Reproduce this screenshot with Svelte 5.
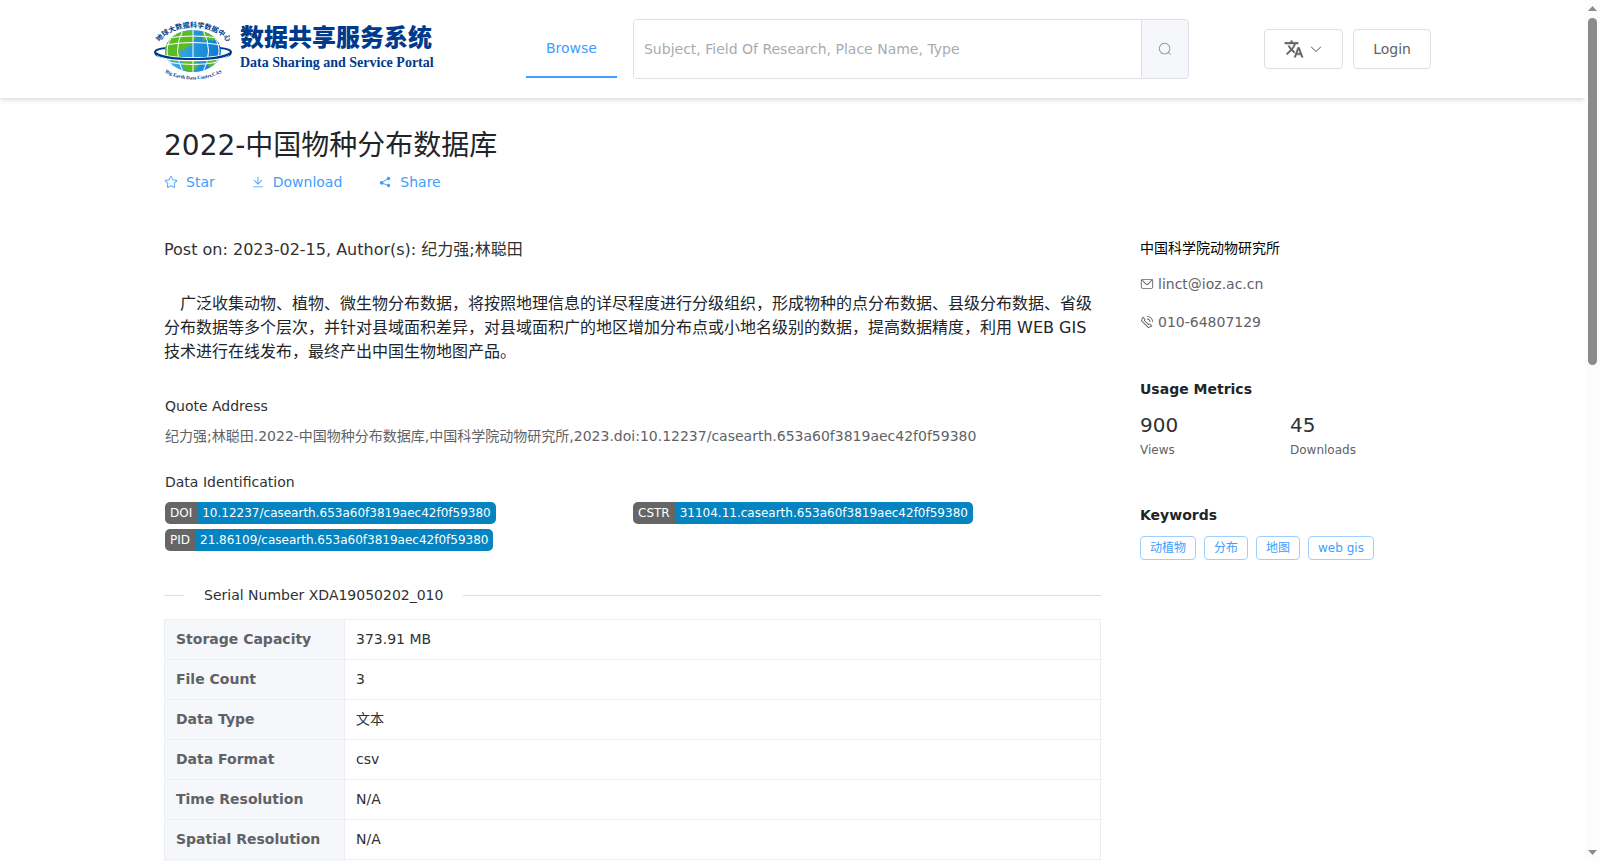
<script lang="ts">
	const icons = {
		search: 'm795.904 750.72 124.992 124.928a32 32 0 0 1-45.248 45.248L750.656 795.904a416 416 0 1 1 45.248-45.184zM480 832a352 352 0 1 0 0-704 352 352 0 0 0 0 704z',
		arrowDown: 'M831.872 340.864 512 652.672 192.128 340.864a30.592 30.592 0 0 0-42.752 0 29.12 29.12 0 0 0 0 41.6L489.664 714.24a32 32 0 0 0 44.672 0l340.288-331.712a29.12 29.12 0 0 0 0-41.728 30.592 30.592 0 0 0-42.752 0z',
		star: 'm512 747.84 228.16 119.936a6.4 6.4 0 0 0 9.28-6.72l-43.52-254.08 184.512-179.904a6.4 6.4 0 0 0-3.52-10.88l-255.104-37.12L517.76 147.904a6.4 6.4 0 0 0-11.52 0L392.192 379.072l-255.104 37.12a6.4 6.4 0 0 0-3.52 10.88L318.08 606.976l-43.584 254.08a6.4 6.4 0 0 0 9.28 6.72L512 747.84zM313.6 924.48a70.4 70.4 0 0 1-102.144-74.24l37.888-220.928L88.96 472.96A70.4 70.4 0 0 1 128 352.896l221.76-32.256 99.2-200.96a70.4 70.4 0 0 1 126.208 0l99.2 200.96 221.824 32.256a70.4 70.4 0 0 1 39.04 120.064L774.72 629.376l37.888 220.928a70.4 70.4 0 0 1-102.144 74.24L512 820.096l-198.4 104.32z',
		download: 'M160 832h704a32 32 0 1 1 0 64H160a32 32 0 1 1 0-64zm384-253.696 236.288-236.352 45.248 45.248L508.8 704 192 387.2l45.248-45.248L480 584.704V128h64v450.304z',
		share: 'm679.872 348.8-301.76 188.608a127.808 127.808 0 0 1 5.12 52.16l279.936 104.96a128 128 0 1 1-22.464 59.904l-279.872-104.96a128 128 0 1 1-16.64-166.272l301.696-188.608a128 128 0 1 1 33.92 54.272z',
		message: 'M128 224v512a64 64 0 0 0 64 64h640a64 64 0 0 0 64-64V224H128zm0-64h768a64 64 0 0 1 64 64v512a128 128 0 0 1-128 128H192A128 128 0 0 1 64 736V224a64 64 0 0 1 64-64zM904 224 656.512 506.88a192 192 0 0 1-289.024 0L120 224h784zm-698.944 0 210.56 240.704a128 128 0 0 0 192.704 0L818.944 224H205.056z',
		phone: 'M79.36 432.256 591.744 944.64a32 32 0 0 0 35.2 6.784l253.44-108.544a32 32 0 0 0 9.984-52.032l-153.856-153.92a32 32 0 0 0-36.928-6.016l-69.888 34.944L358.08 394.24l35.008-69.888a32 32 0 0 0-5.952-36.928L233.152 133.568a32 32 0 0 0-52.032 10.048L72.512 397.056a32 32 0 0 0 6.784 35.2zm60.48-29.952 81.536-190.08L325.568 316.48l-24.64 49.216-20.608 41.216 32.576 32.64 271.552 271.552 32.64 32.64 41.216-20.672 49.28-24.576 104.192 104.128-190.08 81.472L139.84 402.304zM512 320v-64a256 256 0 0 1 256 256h-64a192 192 0 0 0-192-192zm0-192V64a448 448 0 0 1 448 448h-64a384 384 0 0 0-384-384z'
	};

	const actions = [
		{ label: 'Star', icon: icons.star },
		{ label: 'Download', icon: icons.download },
		{ label: 'Share', icon: icons.share }
	];

	const identifiers = [
		{ type: 'DOI', value: '10.12237/casearth.653a60f3819aec42f0f59380' },
		{ type: 'CSTR', value: '31104.11.casearth.653a60f3819aec42f0f59380' },
		{ type: 'PID', value: '21.86109/casearth.653a60f3819aec42f0f59380' }
	];

	const details = [
		['Storage Capacity', '373.91 MB'],
		['File Count', '3'],
		['Data Type', '文本'],
		['Data Format', 'csv'],
		['Time Resolution', 'N/A'],
		['Spatial Resolution', 'N/A'],
		['', '']
	];

	const metrics = [
		{ value: 900, label: 'Views' },
		{ value: 45, label: 'Downloads' }
	];

	const keywords = ['动植物', '分布', '地图', 'web gis'];

	let query = $state('');
</script>

{#snippet icon(path: string)}
	<svg class="icon" viewBox="0 0 1024 1024" aria-hidden="true"><path d={path} /></svg>
{/snippet}

<div class="page">
	<div class="view">
		<header class="topbar">
			<div class="container topbar-inner">
				<a class="logo" href="#home">
					<svg class="globe" viewBox="0 0 78 68" aria-hidden="true">
						<defs>
							<clipPath id="sphere"><ellipse cx="39" cy="36" rx="28" ry="21" /></clipPath>
							<linearGradient id="sea" x1="0" y1="0" x2="1" y2="0">
								<stop offset="0" stop-color="#46b4e6" />
								<stop offset="1" stop-color="#087bd0" />
							</linearGradient>
							<path id="arc-top" d="M4 29 C17 7 61 7 75 29" />
							<path id="arc-bottom" d="M6 55 Q39 74 73 55" />
						</defs>
						<path d="M12 33 C-3 34 -3 41 14 43 Q39 47 64 43 C81 41 81 34 66 33" fill="none" stroke="#003a8c" stroke-width="2" />
						<ellipse cx="39" cy="36" rx="28" ry="21" fill="url(#sea)" />
						<g clip-path="url(#sphere)">
							<path d="M9 38 14 24 28 15 41 16 38 20 42 23 37 27 39 30 33 32 29 36 24 34 28 43 25 47 10 44zM48 18l8-3 7 6-4 5-6-2-4 2zM28 44l9 1 8 4-3 5-7 4-6-5zM53 45l8-1 3 5-9 3z" fill="#5bbb25" />
							<path d="M39 14v44M11 30Q39 25 67 30M14 23Q39 19 64 23M13 47Q39 52 65 47M29 15Q18 36 29 57M49 15Q60 36 49 57M21 18Q5 36 21 54M57 18Q73 36 57 54" fill="none" stroke="#fff" stroke-width="1" />
						</g>
						<path d="M4 39 C12 46 66 46 74 39" fill="none" stroke="#fff" stroke-width="4" />
						<path d="M2 38 C9 46 69 46 76 38" fill="none" stroke="#003a8c" stroke-width="2" />
						<text class="ring-top"><textPath href="#arc-top" startOffset="50%">地球大数据科学数据中心</textPath></text>
						<text class="ring-bottom"><textPath href="#arc-bottom" startOffset="50%">Big Earth Data Center,CAS</textPath></text>
					</svg>
					<span class="wordmark">
						<span class="wordmark-cn">数据共享服务系统</span>
						<span class="wordmark-en">Data Sharing and Service Portal</span>
					</span>
				</a>

				<nav class="menu">
					<a class="menu-item" href="#browse">Browse</a>
				</nav>

				<form class="search" onsubmit={(e) => e.preventDefault()}>
					<input
						type="text"
						aria-label="Search"
						placeholder="Subject, Field Of Research, Place Name, Type"
						bind:value={query}
					/>
					<button type="submit" aria-label="Search">{@render icon(icons.search)}</button>
				</form>

				<div class="account">
					<button class="btn" type="button" aria-label="Language">
						<svg class="translate" viewBox="0 0 24 24" aria-hidden="true">
							<path d="M12.87 15.07l-2.54-2.51.03-.03c1.74-1.94 2.98-4.17 3.71-6.53H17V4h-7V2H8v2H1v1.99h11.17C11.5 7.92 10.44 9.75 9 11.35 8.07 10.32 7.3 9.19 6.69 8h-2c.73 1.63 1.73 3.17 2.98 4.56l-5.09 5.02L4 19l5-5 3.11 3.11.76-2.04zM18.5 10h-2L12 22h2l1.12-3h4.75L21 22h2l-4.5-12zm-2.62 7l1.62-4.33L19.12 17h-3.24z" />
						</svg>
						{@render icon(icons.arrowDown)}
					</button>
					<button class="btn" type="button">Login</button>
				</div>
			</div>
		</header>

		<div class="container content">
			<h1>2022-中国物种分布数据库</h1>
			<div class="actions">
				{#each actions as action}
					<a class="action" href="#{action.label.toLowerCase()}">
						{@render icon(action.icon)}
						<span>{action.label}</span>
					</a>
				{/each}
			</div>

			<div class="columns">
				<main>
					<p class="byline">Post on: 2023-02-15, Author(s): 纪力强;林聪田</p>
					<p class="abstract">广泛收集动物、植物、微生物分布数据，将按照地理信息的详尽程度进行分级组织，形成物种的点分布数据、县级分布数据、省级分布数据等多个层次，并针对县域面积差异，对县域面积广的地区增加分布点或小地名级别的数据，提高数据精度，利用 WEB GIS 技术进行在线发布，最终产出中国生物地图产品。</p>

					<section class="block">
						<h2>Quote Address</h2>
						<p class="citation">纪力强;林聪田.2022-中国物种分布数据库,中国科学院动物研究所,2023.doi:10.12237/casearth.653a60f3819aec42f0f59380</p>
					</section>

					<section class="block">
						<h2>Data Identification</h2>
						<div class="identifiers">
							{#each identifiers as id}
								<a class="badge" href="#{id.type.toLowerCase()}">
									<span class="badge-type">{id.type}</span>
									<span class="badge-value">{id.value}</span>
								</a>
							{/each}
						</div>
					</section>

					<div class="divider"><span>Serial Number XDA19050202_010</span></div>

					<table class="details">
						<tbody>
							{#each details as [name, value]}
								<tr>
									<th scope="row">{name}</th>
									<td>{value}</td>
								</tr>
							{/each}
						</tbody>
					</table>
				</main>

				<aside>
					<p class="institute">中国科学院动物研究所</p>
					<a class="contact" href="mailto:linct@ioz.ac.cn">{@render icon(icons.message)}<span>linct@ioz.ac.cn</span></a>
					<a class="contact" href="tel:010-64807129">{@render icon(icons.phone)}<span>010-64807129</span></a>

					<h3>Usage Metrics</h3>
					<div class="metrics">
						{#each metrics as metric}
							<div>
								<div class="metric-value">{metric.value}</div>
								<div class="metric-label">{metric.label}</div>
							</div>
						{/each}
					</div>

					<h3>Keywords</h3>
					<div class="tags">
						{#each keywords as keyword}
							<span class="tag">{keyword}</span>
						{/each}
					</div>
				</aside>
			</div>
		</div>
	</div>

	<div class="scrollbar" aria-hidden="true">
		<svg viewBox="0 0 15 18"><path d="M3 11h9L7.500 6z" /></svg>
		<div class="track"><div class="thumb"></div></div>
		<svg viewBox="0 0 15 18"><path d="M3 7h9l-4.500 5z" /></svg>
	</div>
</div>

<style>
	:global(body) {
		margin: 0;
		background: #fff;
		color: #303133;
		font-family: 'DejaVu Sans', 'Noto Sans CJK SC', sans-serif;
		font-size: 14px;
		line-height: 20px;
	}

	.page,
	.page :global(*) {
		box-sizing: border-box;
	}

	.page {
		display: flex;
		height: 100vh;
	}

	.view {
		flex: 1;
		min-width: 0;
		overflow: hidden;
	}

	.container {
		max-width: 1277px;
		margin: 0 auto;
	}

	a {
		color: inherit;
		text-decoration: none;
	}

	p,
	h1,
	h2,
	h3 {
		margin: 0;
	}

	button,
	input {
		font: inherit;
	}

	.icon {
		flex: none;
		width: 14px;
		height: 14px;
		fill: currentColor;
	}

	.topbar {
		box-shadow: 0 2px 5px rgba(0, 0, 0, 0.15);
	}

	.topbar-inner {
		display: flex;
		align-items: center;
		height: 98px;
	}

	.logo {
		display: flex;
		align-items: center;
		gap: 8px;
		width: 285px;
		margin-right: 87px;
		color: #003a8c;
	}

	.globe {
		flex: none;
		width: 78px;
		height: 68px;
		overflow: visible;
	}

	.ring-top,
	.ring-bottom {
		fill: #003a8c;
		font-weight: 700;
		text-anchor: middle;
	}

	.ring-top {
		font-family: 'Noto Sans CJK SC', sans-serif;
		font-size: 7px;
	}

	.ring-bottom {
		font-family: 'Liberation Serif', serif;
		font-size: 5px;
	}

	.wordmark {
		display: flex;
		flex-direction: column;
		white-space: nowrap;
	}

	.wordmark-cn {
		font-family: 'Noto Sans CJK SC', sans-serif;
		font-size: 24px;
		font-weight: 900;
		line-height: 28px;
	}

	.wordmark-en {
		font-family: 'Liberation Serif', serif;
		font-size: 14px;
		font-weight: 700;
		line-height: 26px;
	}

	.menu {
		margin-right: 16px;
	}

	.menu-item {
		display: block;
		height: 58px;
		padding: 0 20px;
		border-bottom: 2px solid #409eff;
		color: #409eff;
		line-height: 56px;
	}

	.search {
		display: flex;
		flex: 1;
		height: 60px;
		margin-right: 75px;
		border: 1px solid #dcdfe6;
		border-radius: 4px;
		overflow: hidden;
	}

	.search input {
		flex: 1;
		min-width: 0;
		padding: 0 10px;
		border: 0;
		outline: none;
	}

	.search input::placeholder {
		color: #a8abb2;
	}

	.search button {
		display: flex;
		align-items: center;
		justify-content: center;
		width: 47px;
		padding: 0;
		border: 0;
		border-left: 1px solid #dcdfe6;
		background: #f5f7fa;
		color: #909399;
	}

	.account {
		display: flex;
		gap: 10px;
	}

	.btn {
		display: flex;
		align-items: center;
		gap: 5px;
		height: 40px;
		padding: 0 19px;
		border: 1px solid #dcdfe6;
		border-radius: 4px;
		background: #fff;
		color: #606266;
	}

	.translate {
		width: 20px;
		height: 20px;
		fill: currentColor;
		stroke: currentColor;
		stroke-width: 0.5;
	}

	.content {
		padding: 30px 0 0 10px;
	}

	h1 {
		color: #212529;
		font-size: 28px;
		font-weight: 400;
		line-height: 36px;
	}

	.actions {
		display: flex;
		gap: 36px;
		margin-top: 8px;
		color: #409eff;
	}

	.action {
		display: flex;
		align-items: center;
		gap: 8px;
	}

	.columns {
		display: grid;
		grid-template-columns: minmax(0, 1fr) 291px;
		gap: 39px;
		margin-top: 46px;
	}

	.byline {
		font-size: 16px;
		line-height: 24px;
	}

	.abstract {
		margin: 30px 0 32px;
		color: #212529;
		font-size: 16px;
		line-height: 24px;
		text-indent: 1em;
	}

	.block {
		margin-bottom: 26px;
		padding-left: 1px;
	}

	h2 {
		font-size: 14px;
		font-weight: 400;
	}

	.citation {
		margin-top: 10px;
		color: #606266;
	}

	.identifiers {
		display: grid;
		grid-template-columns: 1fr 1fr;
		justify-items: start;
		row-gap: 5px;
		margin-top: 10px;
	}

	.badge {
		display: flex;
		border-radius: 5px;
		overflow: hidden;
		color: #fff;
		font-size: 12px;
		line-height: 22px;
	}

	.badge-type {
		padding: 0 5px;
		background: #666;
	}

	.badge-value {
		padding: 0 5px;
		background: #0484c1;
	}

	.divider {
		display: flex;
		align-items: center;
		gap: 20px;
		margin: 34px 0 14px;
	}

	.divider::before,
	.divider::after {
		content: '';
		width: 20px;
		height: 1px;
		background: #dcdfe6;
	}

	.divider::after {
		flex: 1;
	}

	.details {
		width: 100%;
		border-collapse: collapse;
		table-layout: fixed;
	}

	.details th,
	.details td {
		height: 40px;
		padding: 0 11px 2px;
		border: 1px solid #ebeef5;
		text-align: left;
	}

	.details th {
		width: 180px;
		background: #f5f7fa;
		color: #606266;
		font-weight: 700;
	}

	.institute {
		color: #000;
	}

	.contact {
		display: flex;
		align-items: center;
		gap: 4px;
		margin-top: 14px;
		color: #606266;
		line-height: 24px;
	}

	h3 {
		margin-top: 45px;
		color: #212529;
		font-size: 14px;
		font-weight: 700;
	}

	.metrics {
		display: grid;
		grid-template-columns: 150px 1fr;
		margin-top: 14px;
	}

	.metric-value {
		font-size: 20px;
		line-height: 24px;
	}

	.metric-label {
		margin-top: 3px;
		color: #606266;
		font-size: 12px;
	}

	.tags {
		display: flex;
		flex-wrap: wrap;
		gap: 8px;
		margin-top: 11px;
	}

	.tag {
		padding: 0 9px;
		border: 1px solid #a0cfff;
		border-radius: 4px;
		color: #409eff;
		font-size: 12px;
		line-height: 22px;
	}

	.scrollbar {
		display: flex;
		flex-direction: column;
		width: 15px;
		background: #fcfcfc;
	}

	.scrollbar svg {
		height: 18px;
		fill: #8b8b8b;
	}

	.track {
		flex: 1;
		padding: 0 3px;
	}

	.thumb {
		height: 42%;
		border-radius: 5px;
		background: #8b8b8b;
	}
</style>
